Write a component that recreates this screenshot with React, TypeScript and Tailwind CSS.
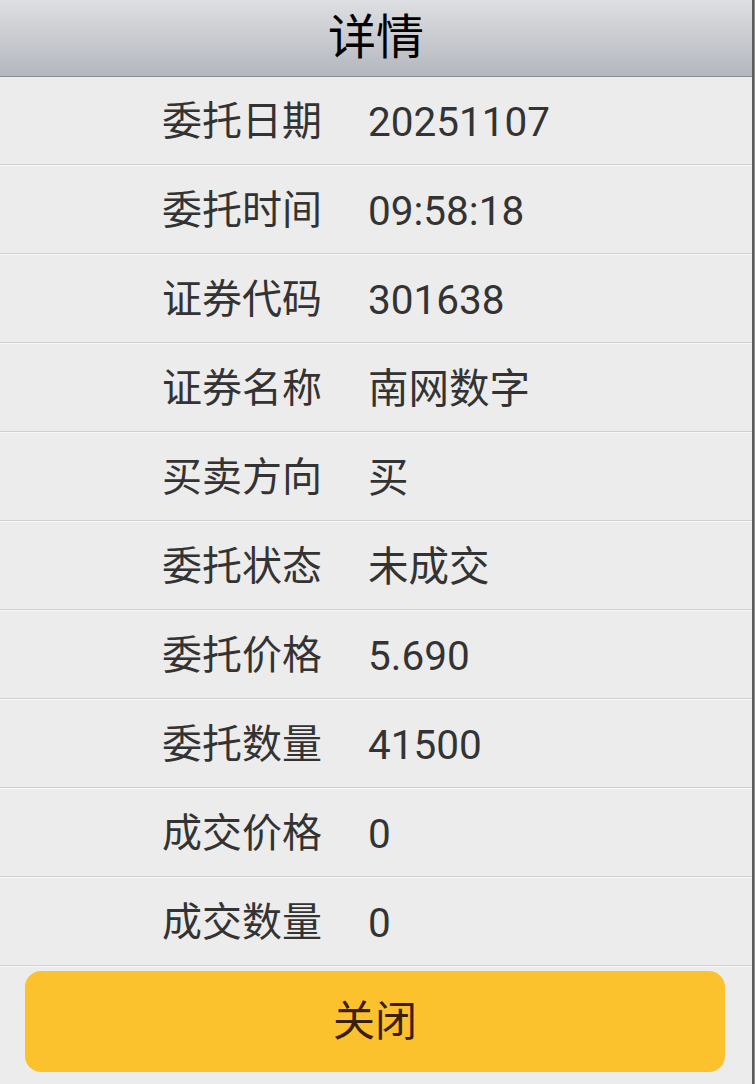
const rows = [
  { label: "委托日期", value: "20251107" },
  { label: "委托时间", value: "09:58:18" },
  { label: "证券代码", value: "301638" },
  { label: "证券名称", value: "南网数字" },
  { label: "买卖方向", value: "买" },
  { label: "委托状态", value: "未成交" },
  { label: "委托价格", value: "5.690" },
  { label: "委托数量", value: "41500" },
  { label: "成交价格", value: "0" },
  { label: "成交数量", value: "0" },
];

export default function App() {
  return (
    <div
      className="flex h-[1084px] w-[755px] bg-[#8e8e8e]"
      style={{ fontFamily: "Roboto, 'Noto Sans CJK SC', sans-serif" }}
    >
      <div className="flex h-full w-[754px] flex-col border-r-2 border-[#5c5c5c] bg-[#ececec]">
        {/* Header */}
        <div className="flex h-[77px] items-center justify-center border-b border-[#8a8c90] bg-gradient-to-b from-[#dedfe2] to-[#b4b7be]">
          <span className="text-[48px] leading-none text-black">详情</span>
        </div>

        {/* Rows */}
        {rows.map((row) => (
          <div key={row.label}>
            <div className="flex h-[87px] items-center pt-[3px] leading-none text-[#333333]">
              <div className="w-[322px] text-right text-[40px]">{row.label}</div>
              <div className="ml-[46px] text-[40.5px]">{row.value}</div>
            </div>
            <div className="h-px bg-[#cbd0d5]" />
            <div className="h-px bg-[#f9f9f9]" />
          </div>
        ))}

        {/* Close button */}
        <div className="px-[25px] pt-[4px]">
          <button className="flex h-[101px] w-[700px] items-center justify-center rounded-[16px] bg-[#fbc22d] text-[42px] text-[#3a1f05]">
            关闭
          </button>
        </div>
      </div>
    </div>
  );
}
